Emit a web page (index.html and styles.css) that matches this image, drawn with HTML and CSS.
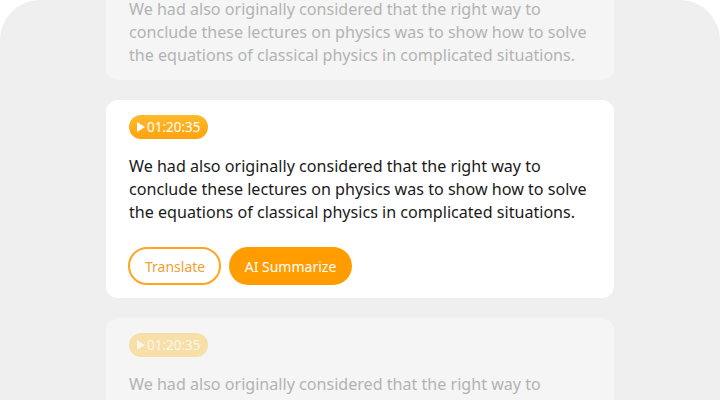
FILE: index.html
```html
<!DOCTYPE html>
<html>
<head>
<meta charset="utf-8">
<link rel="stylesheet" href="styles.css">
</head>
<body>
<div class="frame">
  <div class="list">
    <div class="card faded">
      <div class="badge"><span class="play"></span>01:20:35</div>
      <p class="text">We had also originally considered that the right way to conclude these lectures on physics was to show how to solve the equations of classical physics in complicated situations.</p>
    </div>
    <div class="card active">
      <div class="badge"><span class="play"></span>01:20:35</div>
      <p class="text">We had also originally considered that the right way to conclude these lectures on physics was to show how to solve the equations of classical physics in complicated situations.</p>
      <div class="actions">
        <button class="btn outline">Translate</button>
        <button class="btn solid">AI Summarize</button>
      </div>
    </div>
    <div class="card faded">
      <div class="badge"><span class="play"></span>01:20:35</div>
      <p class="text">We had also originally considered that the right way to conclude these lectures on physics was to show how to solve the equations of classical physics in complicated situations.</p>
    </div>
  </div>
</div>
</body>
</html>
```
FILE: styles.css
```css
* { box-sizing: border-box; }
html, body {
  margin: 0;
  padding: 0;
  background: #ffffff;
  width: 720px;
  height: 400px;
  overflow: hidden;
}
body {
  font-family: "Noto Sans", "Open Sans", sans-serif;
}
.frame {
  width: 720px;
  height: 400px;
  background: #efefef;
  border-radius: 40px 40px 0 0;
  overflow: hidden;
}
.list {
  width: 508px;
  margin: -55px 0 0 106px;
  display: flex;
  flex-direction: column;
  gap: 20px;
}
.card {
  border-radius: 12px;
  padding: 15px 23px 13px 23px;
}
.card.active {
  background: #ffffff;
}
.card.faded {
  background: #f5f5f5;
  padding-bottom: 13px;
}
.faded:first-child .text {
  margin-top: 14px;
}
.badge {
  display: inline-flex;
  align-items: center;
  height: 24px;
  padding: 0 7px 0 8px;
  border-radius: 12px;
  background: linear-gradient(180deg, #ffbb2c 0%, #ffa20f 100%);
  color: #ffffff;
  font-size: 13.5px;
  line-height: 24px;
}
.play {
  width: 0;
  height: 0;
  border-left: 8px solid #ffffff;
  border-top: 5px solid transparent;
  border-bottom: 5px solid transparent;
  margin-right: 2px;
}
.text {
  margin: 16px 0 0 0;
  font-size: 16.1px;
  line-height: 23px;
  color: #1a1a1a;
}
.faded .text {
  color: #b3b3b3;
}
.faded .badge {
  background: #f7dfa8;
  color: #fdf6e6;
}
.faded .play {
  border-left-color: #fdf6e6;
}
.actions {
  display: flex;
  gap: 8px;
  margin-top: 23px;
  margin-left: -1px;
}
.btn {
  font-family: "Noto Sans", "Open Sans", sans-serif;
  font-size: 14px;
  height: 38px;
  border-radius: 19px;
  padding: 0 15px;
  cursor: pointer;
}
.btn.outline {
  background: #ffffff;
  border: 2px solid #ffa51f;
  color: #f0a030;
  width: 93px;
}
.btn.solid {
  background: #ff9d00;
  border: none;
  color: #ffffff;
  width: 123px;
}
```
